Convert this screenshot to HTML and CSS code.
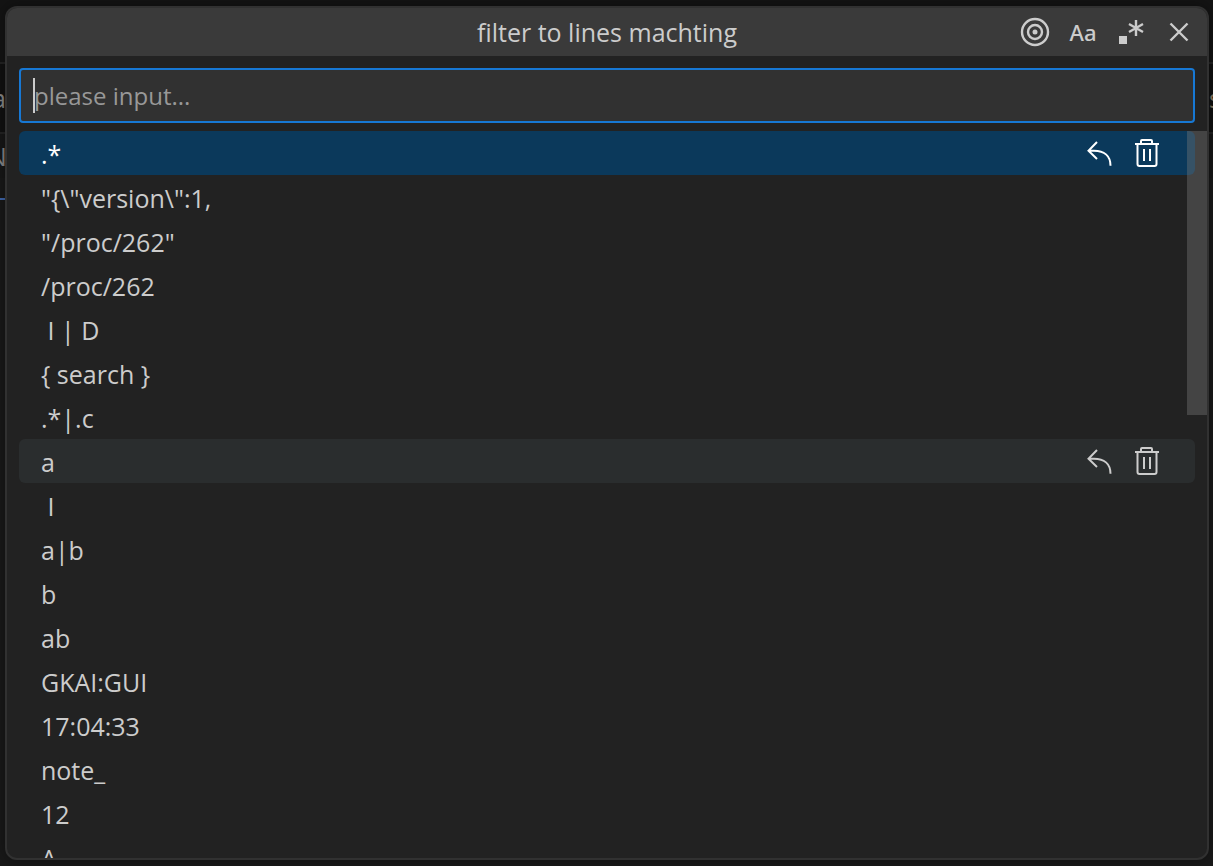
FILE: index.html
```html
<!DOCTYPE html>
<html lang="en">
<head>
<meta charset="utf-8">
<title>filter to lines machting</title>
<link rel="stylesheet" href="styles.css">
</head>
<body>
<svg class="sprite" aria-hidden="true">
  <symbol id="back" viewBox="0 0 32 32"><path d="M14 5 5.500 13.700l8.500 8.300M6 13.700h5c10 0 16.500 5 16.500 15"/></symbol>
  <symbol id="trash" viewBox="0 0 32 32"><path d="M4 7h24M10 7V4q0-1 1-1h9q1 0 1 1v3M6.500 7v20q0 2 2 2h15q2 0 2-2V7M13 12v12M19 12v12"/></symbol>
</svg>
<div class="editor" aria-hidden="true">
  <div class="strip strip-top"></div>
  <div class="strip strip-tabs"><span class="edge-left">a</span><span class="edge-right">s</span></div>
  <div class="strip strip-crumbs"><span class="edge-left">N</span></div>
  <div class="strip strip-body"><span class="dash"></span></div>
</div>
<main class="quick-input">
  <header class="titlebar">
    <h1 class="title">filter to lines machting</h1>
    <div class="tools">
      <button class="tool" aria-label="Target"><svg class="icon bold" viewBox="0 0 32 32"><circle cx="16" cy="16" r="13"/><circle cx="16" cy="16" r="7"/><circle class="solid" cx="16" cy="16" r="2.500"/></svg></button>
      <button class="tool tool-case" aria-label="Match case">Aa</button>
      <button class="tool" aria-label="Use regular expression"><svg class="icon bold" viewBox="0 0 32 32"><path class="solid" d="M4 20h8v8H4z"/><path d="M21 4v16M14 8l14 8M28 8l-14 8"/></svg></button>
      <button class="tool" aria-label="Close"><svg class="icon bold" viewBox="0 0 32 32"><path d="m7.500 7.500 17 17M24.500 7.500l-17 17"/></svg></button>
    </div>
  </header>
  <div class="field"><input class="filter" type="text" placeholder="please input..." aria-label="Filter"><span class="caret"></span></div>
  <div class="results">
    <ul class="list">
      <li class="row selected"><span>.*</span><span class="actions"><button class="action" aria-label="Insert"><svg class="icon"><use href="#back"/></svg></button><button class="action" aria-label="Delete"><svg class="icon"><use href="#trash"/></svg></button></span></li>
      <li class="row">"{\"version\":1,</li>
      <li class="row">"/proc/262"</li>
      <li class="row">/proc/262</li>
      <li class="row"> I | D</li>
      <li class="row">{ search }</li>
      <li class="row">.*|.c</li>
      <li class="row hovered"><span>a</span><span class="actions"><button class="action" aria-label="Insert"><svg class="icon"><use href="#back"/></svg></button><button class="action" aria-label="Delete"><svg class="icon"><use href="#trash"/></svg></button></span></li>
      <li class="row"> I</li>
      <li class="row">a|b</li>
      <li class="row">b</li>
      <li class="row">ab</li>
      <li class="row">GKAI:GUI</li>
      <li class="row">17:04:33</li>
      <li class="row">note_</li>
      <li class="row">12</li>
      <li class="row">A</li>
    </ul>
    <div class="scroll-thumb"></div>
  </div>
</main>
</body>
</html>
```
FILE: styles.css
```css
* { box-sizing: border-box; }
body {
  margin: 0;
  height: 100vh;
  overflow: hidden;
  background: #1a1a1a;
  color: #cccccc;
  font: 25px/46px "Segoe UI", "Open Sans", "Noto Sans", sans-serif;
}
.sprite { position: absolute; width: 0; height: 0; }
.editor { display: flex; flex-direction: column; height: 100vh; }
.strip {
  display: flex;
  justify-content: space-between;
  align-items: center;
  overflow: hidden;
  background: #141414;
  color: #8a8a8a;
}
.strip-top { height: 62px; }
.strip-tabs { height: 70px; border-top: 2px solid #242424; background: #111111; }
.strip-crumbs { height: 46px; border-top: 2px solid #242424; background: #171717; }
.strip-body { flex: 1; align-items: flex-start; background: #191919; }
.edge-left { margin-left: -8px; }
.strip-crumbs .edge-left { margin-left: -12px; }
.edge-right { margin-right: -8px; color: #8a7960; }
.dash { width: 5px; height: 2px; margin-top: 20px; background: #4169b0; }
.quick-input {
  position: absolute;
  inset: 6px 4px 6px 5px;
  display: flex;
  flex-direction: column;
  overflow: hidden;
  border: 2px solid #313131;
  border-radius: 12px;
  background: #222222;
  box-shadow: 0 0 16px rgba(0, 0, 0, 0.4);
}
.titlebar {
  display: grid;
  grid-template-columns: 1fr auto 1fr;
  align-items: center;
  flex: none;
  height: 48px;
  padding: 0 4px;
  background: #3a3a3a;
}
.title { grid-column: 2; margin: 0; font-size: 25px; font-weight: 400; }
.tools { display: flex; justify-content: flex-end; }
.tool, .action {
  display: grid;
  place-items: center;
  width: 48px;
  height: 44px;
  padding: 0;
  border: 0;
  background: none;
  color: inherit;
}
.tool-case { font: 500 22px/40px "Noto Sans", sans-serif; }
.icon { width: 32px; height: 32px; fill: none; stroke: currentColor; stroke-width: 2; }
.bold { stroke-width: 2.400; }
.solid { fill: currentColor; stroke: none; }
.field { position: relative; flex: none; margin: 12px 12px 8px; }
.filter {
  display: block;
  width: 100%;
  height: 55px;
  padding: 0 13px;
  border: 2px solid #1778d4;
  border-radius: 4px;
  outline: 0;
  background: #313131;
  color: #cccccc;
  font: inherit;
  font-size: 24px;
}
.filter::placeholder { color: #989898; opacity: 1; }
.caret { position: absolute; left: 14px; top: 10px; width: 2px; height: 35px; background: #cccccc; }
.results { position: relative; flex: 1; min-height: 0; overflow: hidden; }
.list { margin: 0; padding: 0 12px; list-style: none; }
.row {
  display: flex;
  justify-content: space-between;
  height: 44px;
  padding: 0 24px 0 22px;
  border-radius: 6px;
  white-space: pre;
}
.selected { background: #0b395b; color: #ffffff; }
.hovered { background: #2a2d2e; }
.actions { display: flex; }
.scroll-thumb {
  position: absolute;
  top: 0;
  right: 0;
  width: 20px;
  height: 284px;
  background: rgba(121, 121, 121, 0.4);
}
```
